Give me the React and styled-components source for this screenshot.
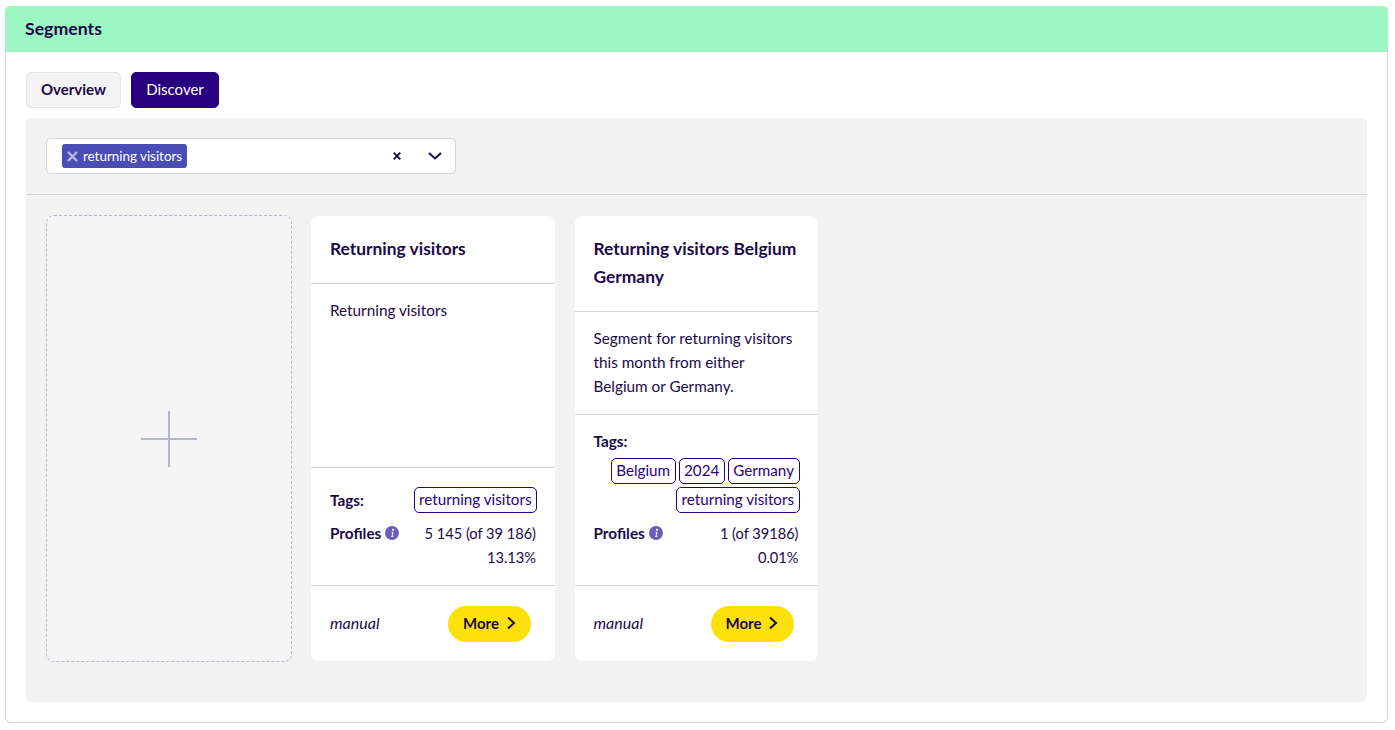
import React from 'react';
import styled, { createGlobalStyle } from 'styled-components';

const Global = createGlobalStyle`
  html, body { margin: 0; padding: 0; background: #fff; }
  body { font-family: Lato, "Noto Sans", sans-serif; color: #1b0a4a; font-size: 15.3px; line-height: 24px; }
  * { box-sizing: border-box; }
`;
const Page = styled.div`
  padding: 6px 7px 7px 5px;
`;
const Shell = styled.section`
  border: 1px solid #d6d6d6;
  border-top: 0;
  border-radius: 6px;
  height: 717px;
  display: flex;
  flex-direction: column;
`;
const Header = styled.header`
  height: 46px;
  margin: 0 -1px;
  flex: none;
  background: #9df7c2;
  border-radius: 5px 5px 0 0;
  padding: 0 20px;
  display: flex;
  align-items: center;
  font-size: 17.7px;
  font-weight: 700;
`;
const Content = styled.div`
  padding: 20px;
  flex: 1;
  display: flex;
  flex-direction: column;
`;
const Tabs = styled.div`
  display: flex;
  gap: 10px;
  margin-bottom: 10px;
`;
const Tab = styled.button`
  height: 36px;
  width: ${p => p.$w}px;
  padding: 0 0 2px;
  border-radius: 5px;
  font: inherit;
  font-size: 15px;
  font-weight: ${p => (p.$active ? 400 : 700)};
  color: ${p => (p.$active ? '#fff' : '#1b0a4a')};
  background: ${p => (p.$active ? '#280080' : '#f3f3f3')};
  border: 1px solid ${p => (p.$active ? '#280080' : '#e4e4e4')};
`;
const Panel = styled.div`
  flex: 1;
  background: #f2f2f2;
  border-radius: 6px;
  display: flex;
  flex-direction: column;
`;
const FilterBar = styled.div`
  padding: 20px;
  border-bottom: 1px solid #d6d6d6;
  height: 77px;
`;
const Select = styled.div`
  width: 410px;
  height: 36px;
  background: #fff;
  border: 1px solid #d6d6d6;
  border-radius: 5px;
  display: flex;
  align-items: center;
  padding-left: 15px;
`;
const Chip = styled.span`
  height: 24px;
  width: 125px;
  background: #4a4db5;
  color: #fff;
  border-radius: 3px;
  display: inline-flex;
  align-items: center;
  padding-left: 5px;
  gap: 5px;
  font-size: 13.4px;
`;
const Controls = styled.div`
  margin-left: auto;
  display: flex;
  align-items: center;
  gap: 27px;
  padding-right: 13px;
`;
const Cards = styled.div`
  display: grid;
  grid-template-columns: 246px 244px 243px;
  column-gap: 19.5px;
  padding: 20px 20px 0 19.5px;
`;
const AddCard = styled.div`
  height: 447px;
  margin-left: 0.5px;
  padding-top: 1px;
  background: #f5f5f5;
  border: 1px dashed #b3b6cc;
  border-radius: 8px;
  display: flex;
  align-items: center;
  justify-content: center;
`;
const Card = styled.article`
  height: 445px;
  margin-top: 1px;
  background: #fff;
  border-radius: 8px;
  display: flex;
  flex-direction: column;
`;
const CardHead = styled.h3`
  margin: 0;
  padding: 19px 19px 20px;
  font-size: 17.4px;
  line-height: 28px;
  font-weight: 700;
  border-bottom: 1px solid #d6d6d6;
`;
const CardBody = styled.p`
  margin: 0;
  padding: 14px 19px 0;
  flex: 1;
`;
const Meta = styled.div`
  flex: none;
  padding: 15px 19px;
  height: ${p => p.$h}px;
  border-top: 1px solid #d6d6d6;
  border-bottom: 1px solid #d6d6d6;
`;
const TagRow = styled.div`
  display: flex;
  flex-direction: ${p => (p.$stack ? 'column' : 'row')};
  justify-content: space-between;
  align-items: ${p => (p.$stack ? 'stretch' : 'flex-end')};
  gap: ${p => (p.$stack ? 4 : 0)}px;
  margin-top: ${p => (p.$stack ? 0 : 4)}px;
`;
const Strong = styled.strong`
  font-weight: 700;
  display: inline-flex;
  align-items: center;
  gap: 4px;
  height: 24px;
  ${p => p.$label && 'padding-bottom: 2px;'}
`;
const TagList = styled.div`
  display: flex;
  flex-wrap: wrap;
  justify-content: flex-end;
  gap: 3px;
  margin-right: -1px;
`;
const Tag = styled.span`
  height: 26px;
  padding: 0 4.5px;
  border: 1px solid #280080;
  border-radius: 5px;
  color: #280080;
  font-size: 15.2px;
  line-height: 23px;
`;
const ProfileRow = styled.div`
  display: flex;
  justify-content: space-between;
  align-items: flex-start;
  margin-top: 8px;
`;
const Numbers = styled.div`
  text-align: right;
  font-size: 14.6px;
  padding-top: 1px;
`;
const Foot = styled.footer`
  flex: none;
  height: 75px;
  padding: 0 24px 0 19px;
  display: flex;
  align-items: center;
  justify-content: space-between;
`;
const Em = styled.em`
  font-style: italic;
  font-size: 16px;
  padding-bottom: 2px;
`;
const MoreButton = styled.button`
  height: 36px;
  width: 83px;
  border: 0;
  border-radius: 18px;
  background: #fbe00a;
  color: #1b0a4a;
  font: inherit;
  font-size: 15px;
  font-weight: 700;
  display: inline-flex;
  align-items: center;
  justify-content: center;
  gap: 7px;
  padding: 0 0 2px;
`;

const Info = () => (
  <svg width="14" height="14" viewBox="0 0 14 14" aria-hidden="true">
    <circle cx="7" cy="7" r="7" fill="#6c5cb8" />
    <path d="M6.6 5.9h1.9L7.6 10.2h.9l-.2.9H5.9l.2-.9h.5l.6-3.4h-.8z" fill="#fff" />
    <circle cx="8" cy="3.8" r="1.1" fill="#fff" />
  </svg>
);
const Chevron = () => (
  <svg width="10" height="14" viewBox="0 0 10 14" fill="none" stroke="#1b0a4a" strokeWidth="2" aria-hidden="true">
    <path d="M2 1.5 8 7l-6 5.5" />
  </svg>
);
const SegmentCard = ({ title, text, metaH, stack, tags, numbers }) => (
  <Card>
    <CardHead>{title}</CardHead>
    <CardBody>{text}</CardBody>
    <Meta $h={metaH}>
      <TagRow $stack={stack}>
        <Strong $label>Tags:</Strong>
        <TagList>{tags.map(t => <Tag key={t}>{t}</Tag>)}</TagList>
      </TagRow>
      <ProfileRow>
        <Strong>Profiles <Info /></Strong>
        <Numbers>{numbers[0]}<br />{numbers[1]}</Numbers>
      </ProfileRow>
    </Meta>
    <Foot>
      <Em>manual</Em>
      <MoreButton>More <Chevron /></MoreButton>
    </Foot>
  </Card>
);

export default function App() {
  return (
    <Page>
      <Global />
      <Shell>
        <Header>Segments</Header>
        <Content>
          <Tabs>
            <Tab $w={95}>Overview</Tab>
            <Tab $w={88} $active>Discover</Tab>
          </Tabs>
          <Panel>
            <FilterBar>
              <Select>
                <Chip>
                  <svg width="11" height="11" viewBox="0 0 11 11" stroke="#b9b9e6" strokeWidth="2.4" aria-hidden="true"><path d="M1 1l9 9M10 1l-9 9" /></svg>
                  returning visitors
                </Chip>
                <Controls>
                  <svg width="8" height="8" viewBox="0 0 8 8" stroke="#1b0a4a" strokeWidth="1.8" aria-hidden="true"><path d="M.7.7l6.6 6.6M7.3.7.7 7.3" /></svg>
                  <svg width="14" height="9" viewBox="0 0 14 9" fill="none" stroke="#1b0a4a" strokeWidth="2" aria-hidden="true"><path d="M1 1 7 6.5 13 1" /></svg>
                </Controls>
              </Select>
            </FilterBar>
            <Cards>
              <AddCard>
                <svg width="56" height="56" viewBox="0 0 56 56" stroke="#b3b6cc" strokeWidth="2" aria-hidden="true"><path d="M28 0v56M0 28h56" /></svg>
              </AddCard>
              <SegmentCard title="Returning visitors" text="Returning visitors" metaH={119} tags={['returning visitors']} numbers={['5 145 (of 39 186)', '13.13%']} />
              <SegmentCard title="Returning visitors Belgium Germany" text="Segment for returning visitors this month from either Belgium or Germany." metaH={172} stack tags={['Belgium', '2024', 'Germany', 'returning visitors']} numbers={['1 (of 39186)', '0.01%']} />
            </Cards>
          </Panel>
        </Content>
      </Shell>
    </Page>
  );
}
